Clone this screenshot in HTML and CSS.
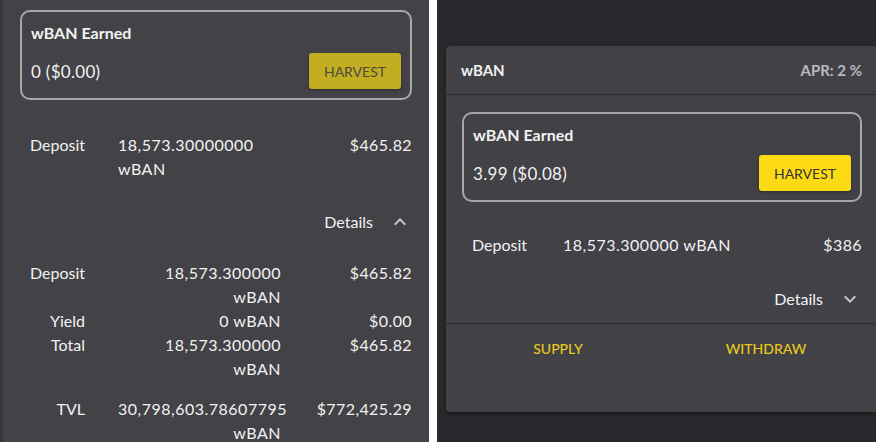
FILE: index.html
```html
<!DOCTYPE html>
<html lang="en">
<head>
  <meta charset="UTF-8" />
  <meta name="viewport" content="width=device-width, initial-scale=1.0"/>
  <title>wBAN Farm</title>
  <link rel="stylesheet" href="styles.css">
</head>
<body>

  <div class="screen">

    <!-- narrow layout, details expanded -->
    <section class="pane pane-narrow">
      <div class="earned">
        <div class="earned-title">wBAN Earned</div>
        <div class="earned-row">
          <span class="earned-value">0 ($0.00)</span>
          <button class="harvest-btn" disabled>HARVEST</button>
        </div>
      </div>

      <div class="stat-row deposit-row">
        <span class="stat-label">Deposit</span>
        <span class="stat-amount">18,573.30000000 wBAN</span>
        <span class="stat-value">$465.82</span>
      </div>

      <div class="details-toggle">
        <span>Details</span>
        <svg class="chevron" viewBox="0 0 24 24"><path d="M7.41 15.41L12 10.83l4.59 4.58L18 14l-6-6-6 6z"/></svg>
      </div>

      <div class="details">
        <div class="stat-row">
          <span class="stat-label">Deposit</span>
          <span class="stat-amount">18,573.300000 wBAN</span>
          <span class="stat-value">$465.82</span>
        </div>
        <div class="stat-row">
          <span class="stat-label">Yield</span>
          <span class="stat-amount">0 wBAN</span>
          <span class="stat-value">$0.00</span>
        </div>
        <div class="stat-row">
          <span class="stat-label">Total</span>
          <span class="stat-amount">18,573.300000 wBAN</span>
          <span class="stat-value">$465.82</span>
        </div>
        <div class="stat-row tvl-row">
          <span class="stat-label">TVL</span>
          <span class="stat-amount">30,798,603.78607795 wBAN</span>
          <span class="stat-value">$772,425.29</span>
        </div>
      </div>
    </section>

    <div class="split"></div>

    <!-- wide layout, details collapsed -->
    <section class="pane pane-wide">
      <article class="farm">
        <header class="farm-head">
          <span class="farm-name">wBAN</span>
          <span class="farm-apr">APR: 2 %</span>
        </header>

        <div class="farm-body">
          <div class="earned">
            <div class="earned-title">wBAN Earned</div>
            <div class="earned-row">
              <span class="earned-value">3.99 ($0.08)</span>
              <button class="harvest-btn">HARVEST</button>
            </div>
          </div>

          <div class="stat-row deposit-row">
            <span class="stat-label">Deposit</span>
            <span class="stat-amount">18,573.300000 wBAN</span>
            <span class="stat-value">$386</span>
          </div>

          <div class="details-toggle">
            <span>Details</span>
            <svg class="chevron" viewBox="0 0 24 24"><path d="M16.59 8.59L12 13.17 7.41 8.59 6 10l6 6 6-6z"/></svg>
          </div>
        </div>

        <div class="farm-actions">
          <button class="action-btn">SUPPLY</button>
          <button class="action-btn">WITHDRAW</button>
        </div>
      </article>
    </section>

  </div>

</body>
</html>
```

FILE: styles.css
```css
body {
  margin: 0;
  background: #29292d;
  font-family: Lato, "Open Sans", sans-serif;
  color: #f2f2f2;
  overflow: hidden;
}

.screen {
  display: flex;
  height: 442px;
}

.pane-narrow {
  width: 429px;
  flex-shrink: 0;
  box-sizing: border-box;
  padding: 10px 17px 0 17px;
  background: #424247;
  border-left: 3px solid #38383c;
}

.split {
  width: 8px;
  flex-shrink: 0;
  background: #fff;
}

.pane-wide {
  flex: 1;
  padding: 46px 0 0 9px;
  overflow: hidden;
}

/* earned box */
.earned {
  border: 2px solid #a8a8ab;
  border-radius: 10px;
  padding: 10px 9px 9px;
}

.earned-title {
  font-weight: bold;
  font-size: 16px;
  line-height: 22px;
}

.earned-row {
  display: flex;
  justify-content: space-between;
  align-items: center;
  margin-top: 9px;
}

.earned-value {
  font-size: 17px;
  letter-spacing: 0.3px;
}

.harvest-btn {
  width: 92px;
  height: 36px;
  border: none;
  border-radius: 3px;
  background: #fcdb14;
  color: #333;
  font-family: inherit;
  font-size: 14px;
  box-shadow: 0 1px 3px rgba(0, 0, 0, 0.35);
}

.harvest-btn:disabled {
  background: #c3ad20;
  color: #4a4a40;
}

/* label / amount / value rows */
.stat-row {
  display: grid;
  grid-template-columns: 65px 204px 1fr;
  font-size: 16px;
  line-height: 24px;
}

.stat-label {
  text-align: right;
}

.stat-amount {
  text-align: right;
  padding: 0 8px 0 33px;
  letter-spacing: 0.5px;
}

.stat-value {
  text-align: right;
  letter-spacing: 0.4px;
}

.deposit-row {
  margin-top: 33px;
}

.deposit-row .stat-amount {
  text-align: left;
}

.details-toggle {
  display: flex;
  justify-content: flex-end;
  align-items: center;
  gap: 15px;
  margin-top: 29px;
  font-size: 16px;
  line-height: 24px;
}

.chevron {
  width: 24px;
  height: 24px;
  fill: #c8c8cc;
}

.details {
  margin-top: 27px;
}

.tvl-row {
  margin-top: 16px;
}

/* farm card */
.farm {
  width: 432px;
  height: 366px;
  box-sizing: border-box;
  background: #414146;
  border-radius: 4px;
  box-shadow: 0 2px 4px rgba(0, 0, 0, 0.4);
}

.farm-head {
  height: 48px;
  padding: 0 16px 0 15px;
  display: flex;
  justify-content: space-between;
  align-items: center;
  border-bottom: 1px solid #2c2c30;
  font-weight: bold;
  font-size: 15px;
}

.farm-apr {
  color: #b9b9bd;
}

.farm-body {
  padding: 17px 16px 12px;
}

.farm-body .deposit-row {
  margin-top: 31px;
  grid-template-columns: 65px 236px 1fr;
}

.farm-body .deposit-row .stat-amount {
  padding-left: 36px;
}

.farm-body .details-toggle {
  margin-top: 30px;
}

.farm-actions {
  display: flex;
  padding: 0 8px 40px;
  border-top: 1px solid #2c2c30;
}

.action-btn {
  flex: 1;
  height: 48px;
  border: none;
  background: none;
  color: #ebc91c;
  font-family: inherit;
  font-size: 14px;
  font-weight: 500;
}
```
